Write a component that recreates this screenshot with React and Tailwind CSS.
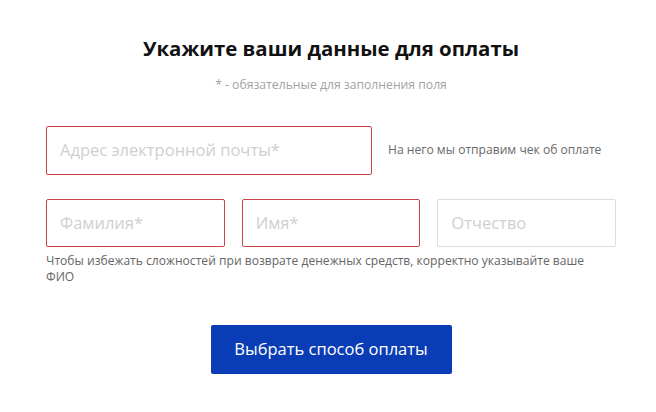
export default function App() {
  return (
    <div className="w-[656px] h-[412px] bg-white font-['Open_Sans',sans-serif] overflow-hidden">
      <div className="ml-[46px] w-[570px] pt-[34px] flex flex-col">
        <h1 className="text-center text-[20.4px] leading-[28px] font-bold text-[#111]">Укажите ваши данные для оплаты</h1>
        <p className="mt-[15px] text-center text-[12.2px] leading-[16px] text-[#a3a3a3]">* - обязательные для заполнения поля</p>
        <div className="mt-[33px] flex items-center gap-[16px]">
          <div className="w-[326px] h-[49px] border border-[#cc4449] rounded-[2px] flex items-center pl-[13px] text-[16.5px] text-[#cfcfcf]">Адрес электронной почты*</div>
          <span className="text-[12.1px] text-[#6a6a6a]">На него мы отправим чек об оплате</span>
        </div>
        <div className="mt-[24px] grid grid-cols-3 gap-[17px]">
          <div className="h-[48px] border border-[#cc4449] rounded-[2px] flex items-center pl-[13px] text-[16.5px] text-[#cfcfcf]">Фамилия*</div>
          <div className="h-[48px] border border-[#cc4449] rounded-[2px] flex items-center pl-[13px] text-[16.5px] text-[#cfcfcf]">Имя*</div>
          <div className="h-[48px] border border-[#dcdcdc] rounded-[2px] flex items-center pl-[13px] text-[16.5px] text-[#cfcfcf]">Отчество</div>
        </div>
        <p className="mt-[6px] text-[12.1px] leading-[16px] text-[#666] pr-[20px]">Чтобы избежать сложностей при возврате денежных средств, корректно указывайте ваше ФИО</p>
        <div className="mt-[40px] flex justify-center">
          <button className="w-[241px] h-[49px] bg-[#0a3db5] rounded-[2px] text-white text-[16.5px]">Выбрать способ оплаты</button>
        </div>
      </div>
    </div>
  );
}
